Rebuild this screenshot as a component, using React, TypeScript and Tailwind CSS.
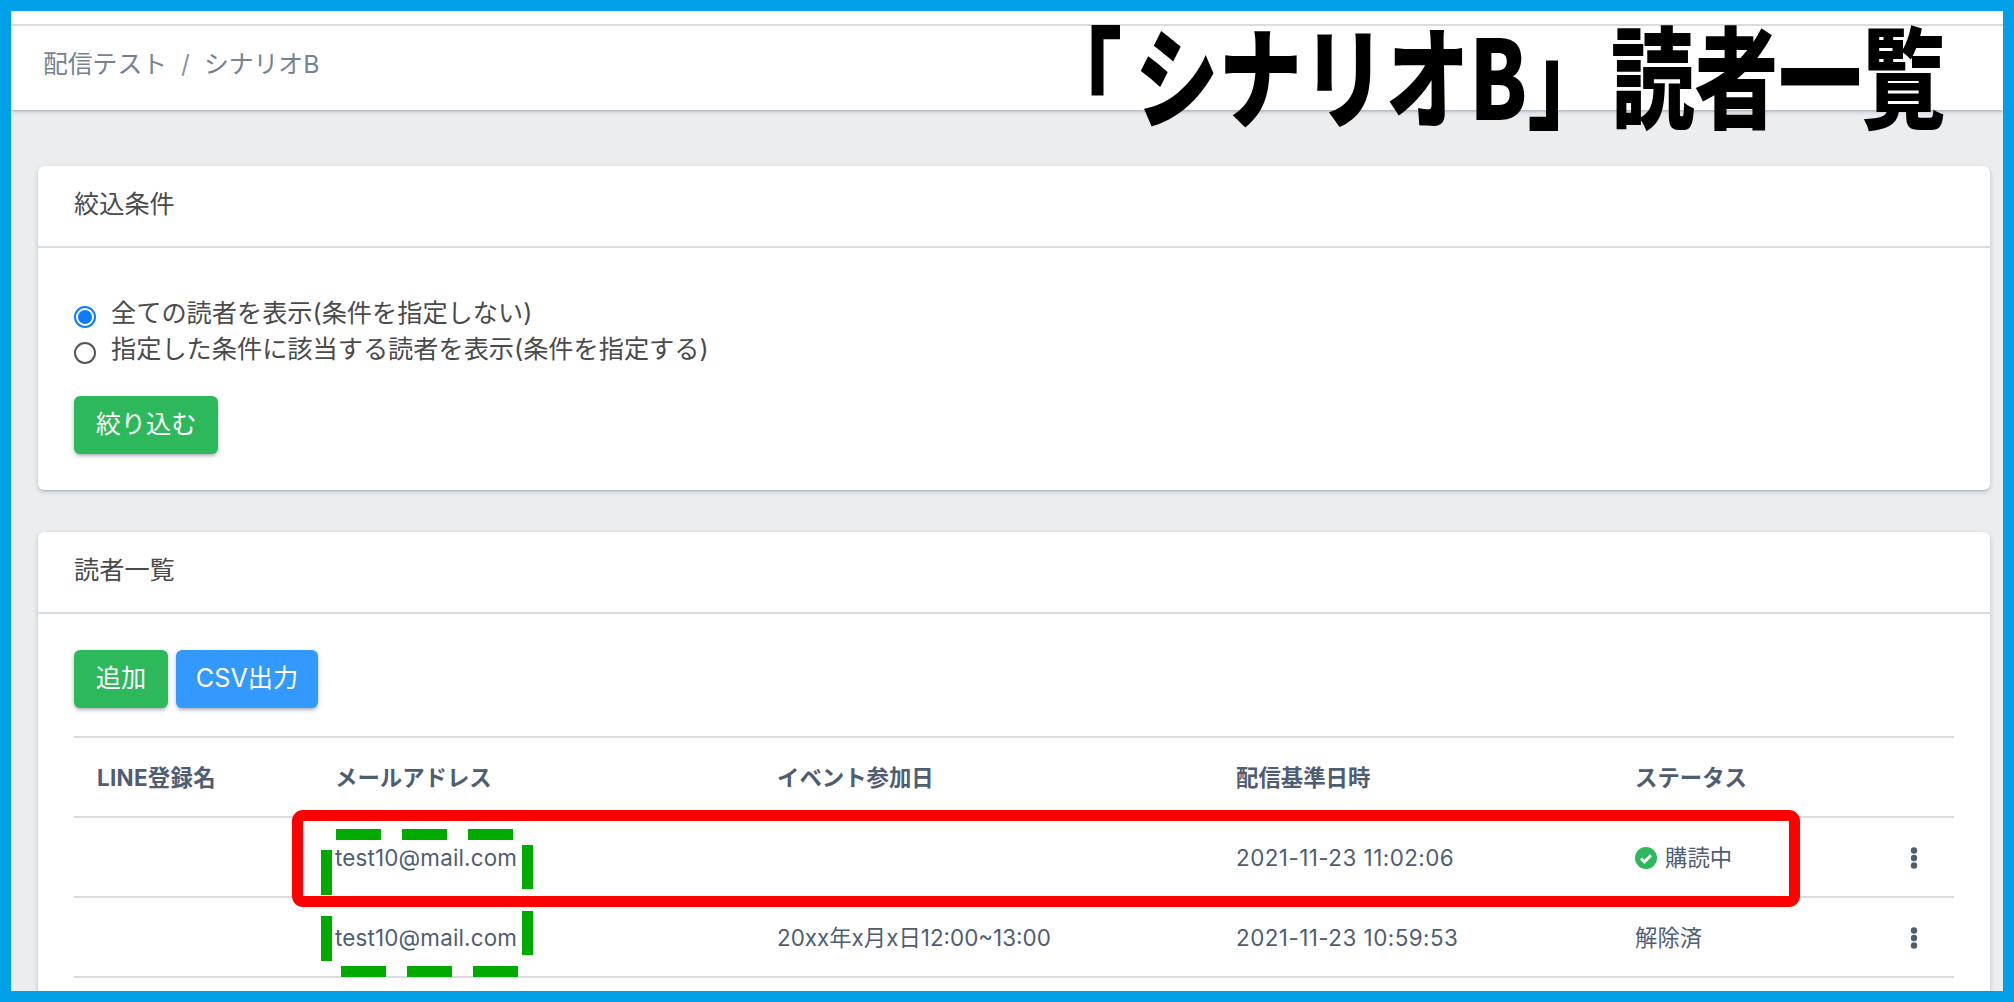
const fontStack = '[font-family:Inter,"Noto_Sans_CJK_JP",sans-serif]';

const cardShadow =
  'shadow-[0_1px_2px_0_rgba(60,75,100,0.14),0_3px_2px_-2px_rgba(60,75,100,0.12),0_2px_5px_0_rgba(60,75,100,0.2)]';

const btnShadow =
  'shadow-[0_2px_3px_0_rgba(60,75,100,0.14),0_3px_2px_-2px_rgba(60,75,100,0.12),0_2px_5px_0_rgba(60,75,100,0.25)]';

function Radio({ checked, label }: { checked?: boolean; label: string }) {
  return (
    <label className="flex items-start gap-[15px] h-9 leading-9 text-[25.2px] text-[#4a4a4a]">
      {checked ? (
        <span className="mt-[11px] size-[22px] rounded-full border-2 border-[#0d7bff] flex items-center justify-center">
          <span className="size-[14px] rounded-full bg-[#0d7bff]" />
        </span>
      ) : (
        <span className="mt-[11px] size-[22px] rounded-full border-2 border-[#555555]" />
      )}
      {label}
    </label>
  );
}

function Kebab() {
  return (
    <svg width="8" height="24" viewBox="0 0 8 24" className="mx-auto block">
      <circle cx="4" cy="4.5" r="3.2" fill="#4f5d73" />
      <circle cx="4" cy="12" r="3.2" fill="#4f5d73" />
      <circle cx="4" cy="19.5" r="3.2" fill="#4f5d73" />
    </svg>
  );
}

function CheckBadge() {
  return (
    <svg width="22" height="22" viewBox="0 0 22 22" className="shrink-0">
      <circle cx="11" cy="11" r="11" fill="#2eb85c" />
      <path d="M6 11.5l3.4 3.4L16 8.2" fill="none" stroke="#fff" strokeWidth="3" />
    </svg>
  );
}

function Card({ title, children, className }: { title: string; children: React.ReactNode; className?: string }) {
  return (
    <section className={`bg-white rounded-[6px] ${cardShadow} ${className ?? ''}`}>
      <h2 className="h-[82px] border-b-2 border-[#d8dbe0] px-9 pt-5 text-[25.2px] leading-9 font-normal text-[#4a4a4a]">
        {title}
      </h2>
      {children}
    </section>
  );
}

const rows = [
  { email: 'test10@mail.com', event: '', date: '2021-11-23 11:02:06', active: true },
  { email: 'test10@mail.com', event: '20xx年x月x日12:00~13:00', date: '2021-11-23 10:59:53', active: false },
];

// 注釈の破線 (緑)
const dashes = [
  [336, 829, 45, 11], [402, 829, 45, 11], [468, 829, 45, 11],
  [522, 845, 11, 44], [522, 911, 11, 44],
  [321, 850, 11, 45], [321, 916, 11, 45],
  [341, 966, 45, 11], [407, 966, 45, 11], [473, 966, 45, 11],
];

export default function App() {
  return (
    <div className={`relative h-screen w-screen overflow-hidden border-[11px] border-[#00a0e9] bg-[#ebedef] ${fontStack}`}>
      <header className={`relative bg-white pt-[13px] ${cardShadow}`}>
        <div className="h-[86px] border-t-2 border-[#d8dbe0] pl-8 pt-5 text-[24.8px] leading-9 text-[#768192] flex">
          <span>配信テスト</span>
          <span className="mx-[14px] text-[#8a93a2]">/</span>
          <span>シナリオB</span>
        </div>
      </header>

      <main className="pt-14 pl-[27px] pr-[13px] flex flex-col gap-[42px]">
        <Card title="絞込条件">
          <div className="px-9 pt-[47px] pb-9">
            <Radio checked label="全ての読者を表示(条件を指定しない)" />
            <Radio label="指定した条件に該当する読者を表示(条件を指定する)" />
            <button className={`mt-[29px] block h-[58px] w-[144px] rounded-[6px] bg-[#2eb85c] text-[25.2px] text-white ${btnShadow}`}>
              絞り込む
            </button>
          </div>
        </Card>

        <Card title="読者一覧">
          <div className="px-9 pt-9 pb-9">
            <div className="flex gap-2">
              <button className={`h-[58px] w-[94px] rounded-[6px] bg-[#2eb85c] text-[25.2px] text-white ${btnShadow}`}>追加</button>
              <button className={`h-[58px] w-[142px] rounded-[6px] bg-[#3399ff] text-[25.2px] text-white ${btnShadow}`}>CSV出力</button>
            </div>
            <table className="mt-7 w-full table-fixed border-collapse text-[22.4px] text-[#4f5d73]">
              <colgroup>
                <col className="w-[238px]" />
                <col className="w-[442px]" />
                <col className="w-[459px]" />
                <col className="w-[399px]" />
                <col />
              </colgroup>
              <thead>
                <tr className="h-[80px] border-t-2 border-b-2 border-[#d8dbe0] text-left">
                  <th className="pl-[23px] pt-0.5 font-bold tracking-[0.3px]">LINE登録名</th>
                  <th className="pl-[23px] pt-0.5 font-bold">メールアドレス</th>
                  <th className="pl-[23px] pt-0.5 font-bold">イベント参加日</th>
                  <th className="pl-[23px] pt-0.5 font-bold">配信基準日時</th>
                  <th className="pl-[23px] pt-0.5 font-bold">ステータス</th>
                  <th className="w-[80px]" />
                </tr>
              </thead>
              <tbody>
                {rows.map((r, i) => (
                  <tr key={i} className="h-[80px] border-b-2 border-[#d8dbe0]">
                    <td />
                    <td className="pl-[23px] pt-0.5 tracking-[0.17px]">{r.email}</td>
                    <td className="pl-[23px] pt-0.5">{r.event}</td>
                    <td className="pl-[23px] pt-0.5 tracking-[0.47px]">{r.date}</td>
                    <td className="pl-[23px] pt-0.5">
                      {r.active ? (
                        <span className="flex items-center gap-2">
                          <CheckBadge />
                          購読中
                        </span>
                      ) : (
                        '解除済'
                      )}
                    </td>
                    <td className="pt-0.5">
                      <Kebab />
                    </td>
                  </tr>
                ))}
              </tbody>
            </table>
          </div>
        </Card>
      </main>

      {/* 注釈 */}
      <div className='absolute right-[58px] top-[-5px] whitespace-nowrap origin-right scale-x-[0.76] text-[110px] leading-[1.2] font-black text-black [font-family:"Noto_Sans_CJK_JP",sans-serif]'>
        <span className="inline-block -translate-x-[17px]">「</span>シナリオB」読者一覧
      </div>
      <div className="absolute left-[281px] top-[799px] h-[97px] w-[1508px] rounded-[11px] border-[11px] border-[#ff0000]" />
      <svg className="absolute left-0 top-0 h-[980px] w-[1992px]" viewBox="11 11 1992 980">
        {dashes.map(([x, y, w, h], i) => (
          <rect key={i} x={x} y={y} width={w} height={h} fill="#00aa00" />
        ))}
      </svg>
    </div>
  );
}
